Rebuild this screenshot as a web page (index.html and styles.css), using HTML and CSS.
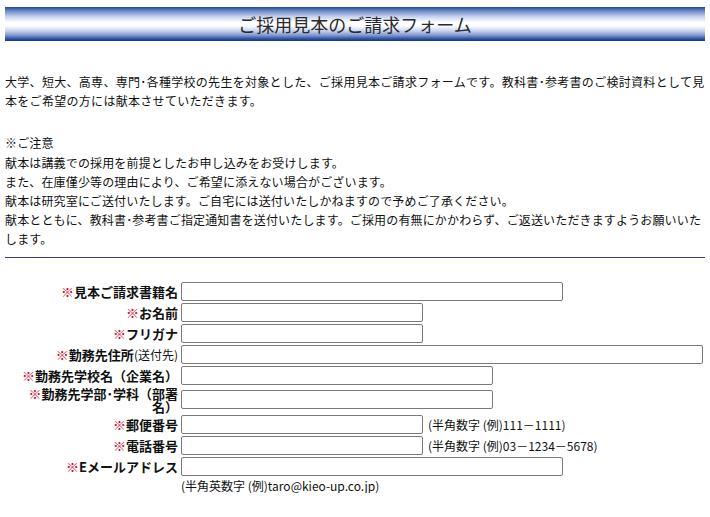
FILE: index.html
```html
<!DOCTYPE html>
<html lang="ja">
<head>
    <meta charset="UTF-8">
    <meta name="viewport" content="width=device-width, initial-scale=1.0">
    <title>ご採用見本のご請求フォーム</title>
    <link rel="stylesheet" href="styles.css">
</head>
<body>
<div class="page">
    <h1 class="midashi">ご採用見本のご請求フォーム</h1>

    <p class="setsumei">大学、短大、高専、専門･各種学校の先生を対象とした、ご採用見本ご請求フォームです。教科書･参考書のご検討資料として見本をご希望の方には献本させていただきます。</p>

    <p class="chuui">※ご注意<br>
    献本は講義での採用を前提としたお申し込みをお受けします。<br>
    また、在庫僅少等の理由により、ご希望に添えない場合がございます。<br>
    献本は研究室にご送付いたします。ご自宅には送付いたしかねますので予めご了承ください。<br>
    献本とともに、教科書･参考書ご指定通知書を送付いたします。ご採用の有無にかかわらず、ご返送いただきますようお願いいたします。</p>

    <hr class="sen">

    <form class="form">
        <label class="koumoku"><span class="kome">※</span>見本ご請求書籍名</label>
        <div class="ran"><input type="text" class="haba-l"></div>

        <label class="koumoku"><span class="kome">※</span>お名前</label>
        <div class="ran"><input type="text" class="haba-s"></div>

        <label class="koumoku"><span class="kome">※</span>フリガナ</label>
        <div class="ran"><input type="text" class="haba-s"></div>

        <label class="koumoku"><span class="kome">※</span>勤務先住所<span class="hosoku">(送付先)</span></label>
        <div class="ran"><input type="text" class="haba-xl"></div>

        <label class="koumoku"><span class="kome">※</span>勤務先学校名（企業名）</label>
        <div class="ran"><input type="text" class="haba-m"></div>

        <label class="koumoku"><span class="kome">※</span>勤務先学部･学科（部署名）</label>
        <div class="ran"><input type="text" class="haba-m"></div>

        <label class="koumoku"><span class="kome">※</span>郵便番号</label>
        <div class="ran"><input type="text" class="haba-s"><span class="rei">(半角数字 (例)111－1111)</span></div>

        <label class="koumoku"><span class="kome">※</span>電話番号</label>
        <div class="ran"><input type="text" class="haba-s"><span class="rei">(半角数字 (例)03－1234－5678)</span></div>

        <label class="koumoku"><span class="kome">※</span>Eメールアドレス</label>
        <div class="ran"><input type="text" class="haba-l"></div>

        <div></div>
        <div class="rei-shita">(半角英数字 (例)taro@kieo-up.co.jp)</div>
    </form>
</div>
</body>
</html>
```

FILE: styles.css
```css
body {
    margin: 0;
    background: #fff;
    color: #111;
    font-family: "Noto Sans CJK JP", "Noto Sans", sans-serif;
    font-size: 12px;
}

.page {
    width: 700px;
    padding: 7px 5px 0;
}

.midashi {
    margin: 0;
    height: 34px;
    line-height: 34px;
    font-size: 18px;
    font-weight: normal;
    color: #2b2b2b;
    text-align: center;
    background: linear-gradient(to bottom, #1f449c 0%, #6f8bc8 12%, #c4d0ec 28%, #ffffff 45%, #ffffff 55%, #c9d3ec 70%, #7b93cc 84%, #2a4ea2 94%, #12368e 100%);
}

.setsumei {
    margin: 31px 0 0;
    line-height: 19.2px;
    letter-spacing: 0.3px;
}

.chuui {
    margin: 23px 0 0;
    line-height: 19.2px;
    letter-spacing: 0.15px;
}

.sen {
    margin: 8px 0 0;
    border: 0;
    border-top: 1px solid #3a3f6a;
    height: 0;
}

.form {
    display: grid;
    grid-template-columns: 160px 1fr;
    column-gap: 3px;
    row-gap: 2px;
    align-items: center;
    margin-top: 24px;
    padding-left: 13px;
}

.koumoku {
    text-align: right;
    font-size: 13px;
    font-weight: bold;
    line-height: 13px;
    color: #111;
}

.kome {
    color: #d8002a;
}

.hosoku {
    font-size: 12px;
    font-weight: normal;
}

.ran {
    display: flex;
    align-items: center;
}

.ran input {
    box-sizing: border-box;
    height: 19px;
    margin: 0;
    padding: 0 2px;
    border: 1px solid #7a7a7a;
    border-radius: 2px;
    background: #fff;
    font-size: 12px;
}

.haba-s { width: 242px; }
.haba-m { width: 312px; }
.haba-l { width: 382px; }
.haba-xl { width: 522px; }

.rei {
    margin-left: 5px;
    white-space: nowrap;
}

.rei-shita {
    line-height: 15px;
}
```
